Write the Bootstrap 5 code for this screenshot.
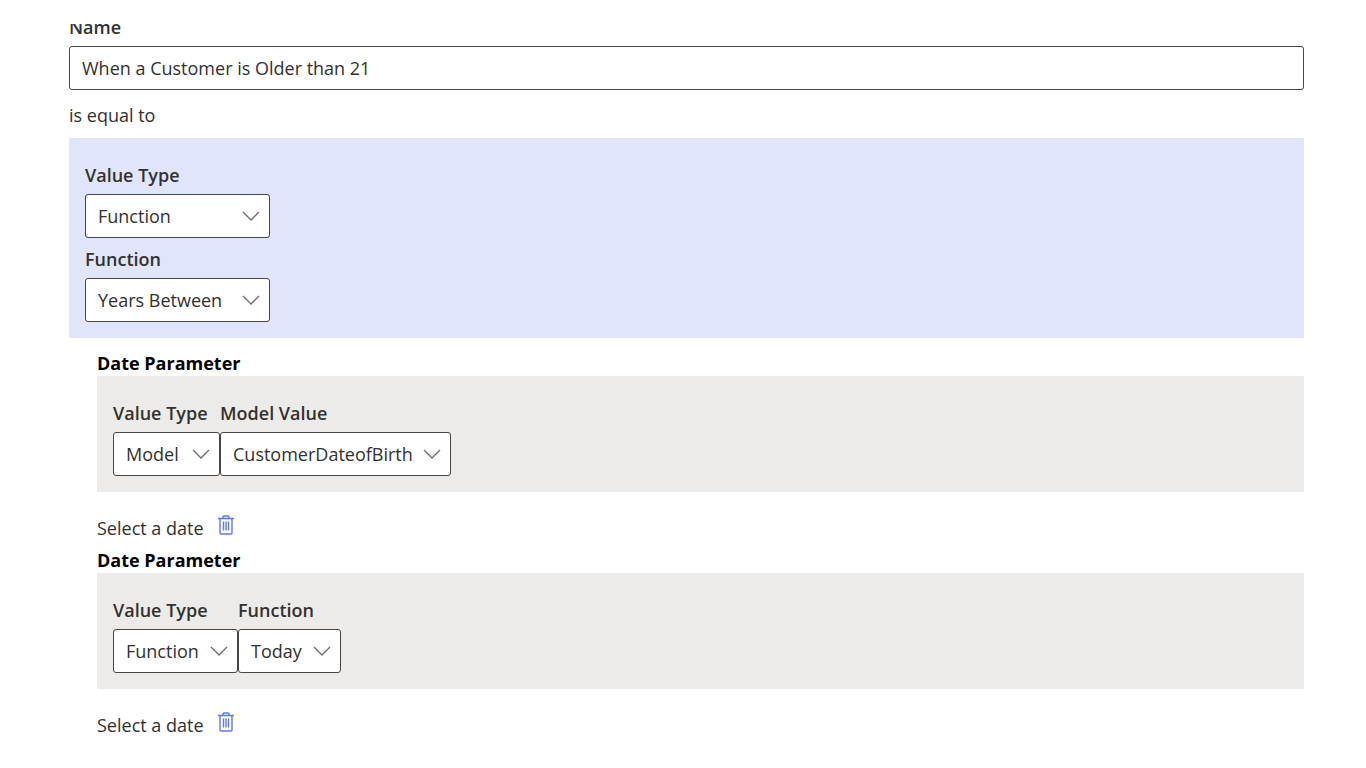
<!DOCTYPE html>
<html lang="en">
<head>
<meta charset="utf-8">
<meta name="viewport" content="width=device-width, initial-scale=1">
<title>Rule condition</title>
<link href="https://cdn.jsdelivr.net/npm/bootstrap@5.3.0/dist/css/bootstrap.min.css" rel="stylesheet">
<style>
  body { font-family: "Open Sans", "Noto Sans", sans-serif; font-size: 18px; line-height: 28px; color: #323130; }
  .rule-editor { margin: 24px 62px 0 69px; overflow: hidden; }
  .field-label { display: block; margin: 7px 0 5px; font-weight: 600; }
  /* The form is scrolled, so its first label is partly out of view */
  .scrolled-label { margin-top: -11px; }
  .form-control, .form-select {
    height: 44px; padding: 0 12px; font-size: 18px; line-height: 28px;
    color: #323130; border: 1px solid #484644; border-radius: 3px; background-color: #fff;
  }
  .form-select {
    padding-right: 28px;
    background-image: url("data:image/svg+xml,%3Csvg xmlns='http://www.w3.org/2000/svg' viewBox='0 0 18 10'%3E%3Cpath d='M1 1l8 8 8-8' fill='none' stroke='%23706e6c' stroke-width='1.3'/%3E%3C/svg%3E");
    background-size: 18px 10px; background-position: right 9px center;
  }
  .operator { margin: 11px 0 9px; }
  .value-panel { background: #e0e5fc; }
  .parameter-panel { background: #edebe9; }
  .parameters { margin-left: 28px; padding-top: 12px; }
  .parameter-title { margin: 0; font-size: 18px; line-height: 26px; font-weight: 700; color: #000; }
  .date-row { margin: 22px 0 5px; gap: 14px; }
  .date-row .btn { line-height: 1; margin-bottom: 6px; color: #5c78f0; }
  .w-main { width: 185px; }
  .w-model { width: 107px; }
  .w-birth { width: 231px; }
  .w-function { width: 125px; }
  .w-today { width: 103px; }
</style>
</head>
<body>
<main class="rule-editor">
  <form>
    <label class="field-label scrolled-label" for="ruleName">Name</label>
    <input class="form-control" id="ruleName" type="text" value="When a Customer is Older than 21">
    <p class="operator">is equal to</p>

    <section class="value-panel p-3">
      <label class="field-label" for="valueType">Value Type</label>
      <select class="form-select w-main" id="valueType"><option>Function</option></select>
      <label class="field-label" for="functionName">Function</label>
      <select class="form-select w-main" id="functionName"><option>Years Between</option></select>
    </section>

    <div class="parameters">
      <section>
        <h2 class="parameter-title">Date Parameter</h2>
        <div class="parameter-panel d-flex p-3">
          <div>
            <label class="field-label" for="type1">Value Type</label>
            <select class="form-select w-model" id="type1"><option>Model</option></select>
          </div>
          <div>
            <label class="field-label" for="value1">Model Value</label>
            <select class="form-select w-birth" id="value1"><option>CustomerDateofBirth</option></select>
          </div>
        </div>
        <div class="date-row d-flex align-items-center">
          <span>Select a date</span>
          <button class="btn border-0 p-0" type="button" aria-label="Delete first date">
            <svg class="d-block" width="16" height="20" viewBox="0 0 16 20" fill="none" stroke="currentColor" stroke-width="1.4"><path d="M0 3.5h16M5 3.5V2q0-1 1-1h4q1 0 1 1v1.5M2 3.5V18q0 1 1 1h10q1 0 1-1V3.5M5.5 6.5v9M8 6.5v9M10.5 6.5v9"/></svg>
          </button>
        </div>
      </section>
      <section>
        <h2 class="parameter-title">Date Parameter</h2>
        <div class="parameter-panel d-flex p-3">
          <div>
            <label class="field-label" for="type2">Value Type</label>
            <select class="form-select w-function" id="type2"><option>Function</option></select>
          </div>
          <div>
            <label class="field-label" for="value2">Function</label>
            <select class="form-select w-today" id="value2"><option>Today</option></select>
          </div>
        </div>
        <div class="date-row d-flex align-items-center">
          <span>Select a date</span>
          <button class="btn border-0 p-0" type="button" aria-label="Delete second date">
            <svg class="d-block" width="16" height="20" viewBox="0 0 16 20" fill="none" stroke="currentColor" stroke-width="1.4"><path d="M0 3.5h16M5 3.5V2q0-1 1-1h4q1 0 1 1v1.5M2 3.5V18q0 1 1 1h10q1 0 1-1V3.5M5.5 6.5v9M8 6.5v9M10.5 6.5v9"/></svg>
          </button>
        </div>
      </section>
    </div>
  </form>
</main>
<script src="https://cdn.jsdelivr.net/npm/bootstrap@5.3.0/dist/js/bootstrap.bundle.min.js"></script>
</body>
</html>
